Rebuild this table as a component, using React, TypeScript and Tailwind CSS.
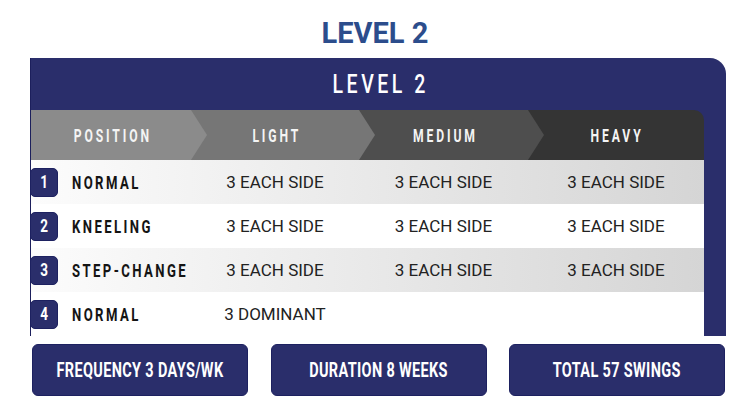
import React from "react";

const rows = [
  { n: "1", label: "NORMAL", cells: ["3 EACH SIDE", "3 EACH SIDE", "3 EACH SIDE"], shade: true },
  { n: "2", label: "KNEELING", cells: ["3 EACH SIDE", "3 EACH SIDE", "3 EACH SIDE"], shade: false },
  { n: "3", label: "STEP-CHANGE", cells: ["3 EACH SIDE", "3 EACH SIDE", "3 EACH SIDE"], shade: true },
  { n: "4", label: "NORMAL", cells: ["3 DOMINANT", "", ""], shade: false },
];

function HeadText({ children }: { children: React.ReactNode }) {
  return (
    <span className="inline-block pl-[4.5px] text-[19px] leading-none font-bold tracking-[4.5px] scale-x-[0.64] text-[#f4f4f4] whitespace-nowrap">
      {children}
    </span>
  );
}

function Button({ children }: { children: React.ReactNode }) {
  return (
    <div className="w-[216px] h-[52px] shrink-0 rounded-[6px] bg-[#2a2e6b] border border-[#1d2160] flex items-center justify-center">
      <span className="inline-block text-[21px] leading-none font-bold scale-x-[0.69] text-white tracking-[0.5px] whitespace-nowrap">
        {children}
      </span>
    </div>
  );
}

export default function App() {
  return (
    <div
      className="w-[750px] h-[414px] bg-white overflow-hidden"
      style={{ fontFamily: "Roboto, 'Liberation Sans', sans-serif" }}
    >
      <div className="h-[58px] pt-[19px] flex justify-center">
        <span className="text-[29px] leading-none font-bold text-[#2c4d8c]">LEVEL 2</span>
      </div>

      <div className="ml-[30px] w-[696px] h-[278px] bg-[#2a2e6b] rounded-tr-[16px] border-l border-[#1c1f5c] flex flex-col">
        <div className="h-[52px] shrink-0 flex items-center justify-center">
          <span className="inline-block pl-[4.5px] text-[25px] leading-none font-medium tracking-[4.5px] scale-x-[0.78] text-white">
            LEVEL 2
          </span>
        </div>

        <div className="w-[673px] flex flex-col">
          <div className="h-[50px] flex">
            <div className="relative w-[160px] shrink-0 h-full bg-[#8b8b8b] flex items-center justify-center">
              <HeadText>POSITION</HeadText>
              <div className="absolute left-full top-0 h-full w-[16px] z-10 bg-[#8b8b8b] [clip-path:polygon(0_0,100%_50%,0_100%)]" />
            </div>
            <div className="relative w-[168px] shrink-0 h-full bg-[#767676] flex items-center justify-center">
              <HeadText>LIGHT</HeadText>
              <div className="absolute left-full top-0 h-full w-[16px] z-10 bg-[#767676] [clip-path:polygon(0_0,100%_50%,0_100%)]" />
            </div>
            <div className="relative w-[169px] shrink-0 h-full bg-[#4e4e4e] flex items-center justify-center">
              <HeadText>MEDIUM</HeadText>
              <div className="absolute left-full top-0 h-full w-[16px] z-10 bg-[#4e4e4e] [clip-path:polygon(0_0,100%_50%,0_100%)]" />
            </div>
            <div className="w-[176px] shrink-0 h-full bg-[#343434] rounded-tr-[10px] flex items-center justify-center">
              <HeadText>HEAVY</HeadText>
            </div>
          </div>

          {rows.map((r, i) => (
            <div
              key={i}
              className={
                r.shade
                  ? "h-[44px] flex items-center bg-gradient-to-r from-[#fcfcfc] via-[#e9e9e9] to-[#d5d5d5]"
                  : "h-[44px] flex items-center bg-white"
              }
            >
              <div className="w-[160px] shrink-0 flex items-center">
                <div className="-ml-px w-[28px] h-[29px] shrink-0 rounded-[5px] bg-[#2a2e6b] border border-[#1d2160] flex items-center justify-center">
                  <span className="inline-block text-[18px] leading-none font-bold scale-x-[0.75] text-white">
                    {r.n}
                  </span>
                </div>
                <div className="ml-[14px] w-0 flex items-center">
                  <span className="inline-block shrink-0 origin-left whitespace-nowrap text-[19px] leading-none font-bold tracking-[3.5px] scale-x-[0.69] text-[#141414]">
                    {r.label}
                  </span>
                </div>
              </div>
              <div className="w-[168px] shrink-0 text-center text-[17px] leading-none text-[#222]">{r.cells[0]}</div>
              <div className="w-[169px] shrink-0 text-center text-[17px] leading-none text-[#222]">{r.cells[1]}</div>
              <div className="w-[176px] shrink-0 text-center text-[17px] leading-none text-[#222]">{r.cells[2]}</div>
            </div>
          ))}
        </div>
      </div>

      <div className="ml-[32px] mt-[8px] w-[693px] flex justify-between">
        <Button>FREQUENCY 3 DAYS/WK</Button>
        <Button>DURATION 8 WEEKS</Button>
        <Button>TOTAL 57 SWINGS</Button>
      </div>
    </div>
  );
}
